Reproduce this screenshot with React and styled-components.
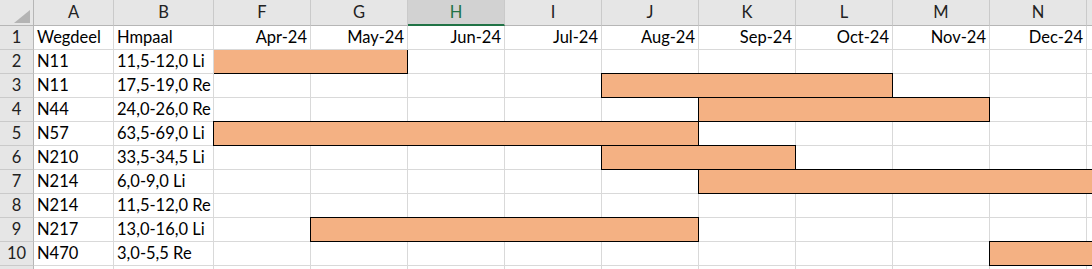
import React from "react";
import styled, { createGlobalStyle } from "styled-components";

const GlobalStyle = createGlobalStyle`
  html, body {
    margin: 0;
    padding: 0;
    background: #fff;
  }
`;

const months = ["Apr-24", "May-24", "Jun-24", "Jul-24", "Aug-24", "Sep-24", "Oct-24", "Nov-24", "Dec-24", ""];
const letters = ["F", "G", "H", "I", "J", "K", "L", "M", "N", ""];

// start = index into months, span = number of month columns
const rows = [
  { n: 2, a: "N11", b: "11,5-12,0 Li", start: 0, span: 2, noTop: true, noLeft: true },
  { n: 3, a: "N11", b: "17,5-19,0 Re", start: 4, span: 3 },
  { n: 4, a: "N44", b: "24,0-26,0 Re", start: 5, span: 3 },
  { n: 5, a: "N57", b: "63,5-69,0 Li", start: 0, span: 5 },
  { n: 6, a: "N210", b: "33,5-34,5 Li", start: 4, span: 2 },
  { n: 7, a: "N214", b: "6,0-9,0 Li", start: 5, span: 5, open: true },
  { n: 8, a: "N214", b: "11,5-12,0 Re" },
  { n: 9, a: "N217", b: "13,0-16,0 Li", start: 1, span: 4 },
  { n: 10, a: "N470", b: "3,0-5,5 Re", start: 8, span: 2, open: true },
  { n: "", a: "", b: "" },
];

const Sheet = styled.div`
  display: grid;
  grid-template-columns: 34px 80px 100px repeat(10, 97px);
  grid-template-rows: 26px;
  grid-auto-rows: 24px;
  width: 1092px;
  height: 269px;
  overflow: hidden;
  font-family: Lato, "Liberation Sans", sans-serif;
  font-size: 16.5px;
  color: #000;
`;

const Corner = styled.div`
  box-sizing: border-box;
  background: #e6e6e6;
  border-right: 1px solid #b6b6b6;
  border-bottom: 1px solid #b6b6b6;
  display: flex;
  align-items: flex-end;
  justify-content: flex-end;
  padding: 0 3px 2px 0;

  svg {
    display: block;
  }
`;

const ColHead = styled.div`
  box-sizing: border-box;
  background: ${(p) => (p.$selected ? "#d2d2d2" : "#e6e6e6")};
  color: ${(p) => (p.$selected ? "#217346" : "#222")};
  border-right: 1px solid #cacaca;
  border-bottom: ${(p) => (p.$selected ? "2px solid #217346" : "1px solid #b6b6b6")};
  text-align: center;
  line-height: 25px;
`;

const RowHead = styled.div`
  box-sizing: border-box;
  background: #e6e6e6;
  color: #222;
  border-right: 1px solid #b6b6b6;
  border-bottom: 1px solid #cacaca;
  text-align: center;
  line-height: 23px;
`;

const Cell = styled.div`
  box-sizing: border-box;
  border-right: 1px solid #d9d9d9;
  border-bottom: 1px solid #d9d9d9;
  padding: 0 3px;
  line-height: 23px;
  white-space: nowrap;
  overflow: hidden;
  text-align: ${(p) => (p.$right ? "right" : "left")};
`;

const Bar = styled.div`
  box-sizing: border-box;
  grid-column: span ${(p) => p.$span};
  background: #f4b183;
  margin-top: ${(p) => (p.$noTop ? "0" : "-1px")};
  margin-left: ${(p) => (p.$noLeft ? "0" : "-1px")};
  border-top: ${(p) => (p.$noTop ? "none" : "1px solid #000")};
  border-left: ${(p) => (p.$noLeft ? "none" : "1px solid #000")};
  border-right: ${(p) => (p.$open ? "none" : "1px solid #000")};
  border-bottom: 1px solid #000;
`;

const CornerMark = () => (
  <svg width="16" height="13" viewBox="0 0 16 13">
    <polygon points="16,0 16,13 0,13" fill="#b4b4b4" />
  </svg>
);

const MonthCells = ({ row }) => {
  const out = [];
  let i = 0;
  while (i < months.length) {
    if (row.span && i === row.start) {
      out.push(
        <Bar
          key={i}
          $span={row.span}
          $noTop={row.noTop}
          $noLeft={row.noLeft}
          $open={row.open}
        />
      );
      i += row.span;
    } else {
      out.push(<Cell key={i} />);
      i += 1;
    }
  }
  return out;
};

export default function App() {
  return (
    <>
      <GlobalStyle />
      <Sheet>
        <Corner>
          <CornerMark />
        </Corner>
        <ColHead>A</ColHead>
        <ColHead>B</ColHead>
        {letters.map((l, i) => (
          <ColHead key={i} $selected={l === "H"}>
            {l}
          </ColHead>
        ))}

        <RowHead>1</RowHead>
        <Cell>Wegdeel</Cell>
        <Cell>Hmpaal</Cell>
        {months.map((m, i) => (
          <Cell key={i} $right>
            {m}
          </Cell>
        ))}

        {rows.map((row, idx) => (
          <React.Fragment key={idx}>
            <RowHead>{row.n}</RowHead>
            <Cell>{row.a}</Cell>
            <Cell>{row.b}</Cell>
            <MonthCells row={row} />
          </React.Fragment>
        ))}
      </Sheet>
    </>
  );
}
